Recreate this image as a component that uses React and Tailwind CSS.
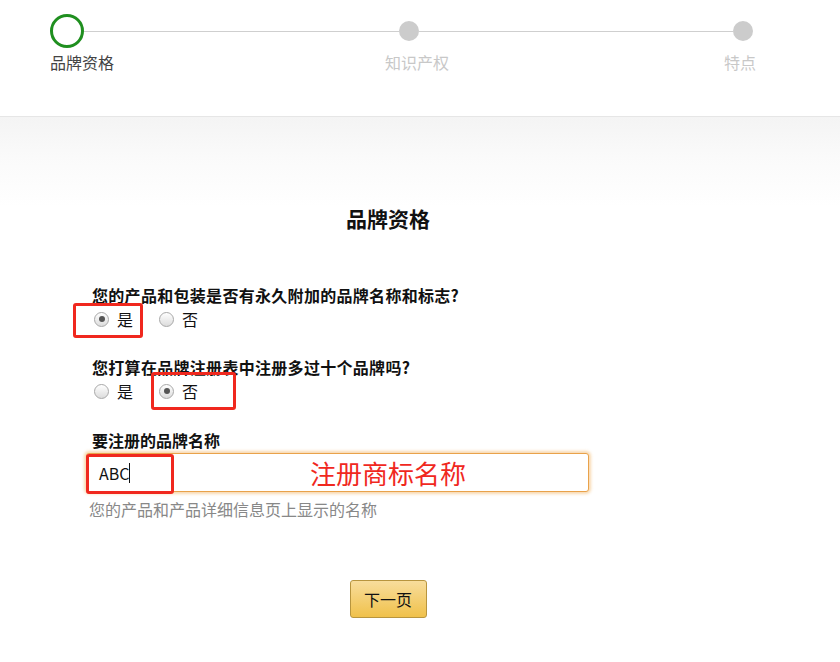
import React from 'react';

const FONT = { fontFamily: '"Noto Sans CJK SC", "Noto Sans", sans-serif' };

// Radio drawn by hand so it looks like the old grey browser radios
const Radio = ({ checked, label }) => (
  <div className="flex items-center">
    <span className="w-[15px] h-[15px] rounded-full border border-[#a8a8a8] bg-[linear-gradient(to_bottom,#ffffff,#dcdcdc)] flex items-center justify-center">
      {checked && <span className="w-[6px] h-[6px] rounded-full bg-[#555]" />}
    </span>
    <span className="ml-[8px] text-[16px] leading-5 text-[#111]">{label}</span>
  </div>
);

// red annotation frame drawn over the form
const Mark = ({ className }) => (
  <div className={`absolute border-[3px] border-[#f0281e] rounded-[3px] ${className}`} />
);

const Stepper = () => (
  <header className="h-[117px] border-b border-[#e6e6e6] bg-white pt-[14px] pl-[50px] pr-[87px]">
    <div className="flex items-center">
      <span className="w-[34px] h-[34px] rounded-full border-[3px] border-[#1f8f1f] bg-white" />
      <span className="flex-1 h-px bg-[#cfcfcf]" />
      <span className="w-[20px] h-[20px] rounded-full bg-[#cccccc]" />
      <span className="flex-1 h-px bg-[#cfcfcf]" />
      <span className="w-[20px] h-[20px] rounded-full bg-[#cccccc]" />
    </div>
    <div className="flex mt-[2px] text-[16px] leading-[24px]">
      <span className="text-[#444]">品牌资格</span>
      <span className="ml-[271px] text-[#c8c8c8]">知识产权</span>
      <span className="ml-auto -mr-[3px] text-[#c8c8c8]">特点</span>
    </div>
  </header>
);

export default function App() {
  return (
    <div className="w-[840px] min-h-[662px] bg-white" style={FONT}>
      <Stepper />
      <main className="bg-[linear-gradient(to_bottom,#f4f4f4,#fafafa_40px,#ffffff_90px)] pb-[44px]">
        <div className="w-[596px] ml-[90px] pt-[87px]">
          <h1 className="text-center text-[21px] leading-7 font-bold text-[#111]">品牌资格</h1>

          <p className="mt-[53px] ml-[2px] text-[16px] leading-5 font-bold tracking-[0.3px] text-[#111]">
            您的产品和包装是否有永久附加的品牌名称和标志?
          </p>
          <div className="relative mt-[4px] ml-[4px] flex gap-[26px]">
            <Radio checked label="是" />
            <Radio label="否" />
            <Mark className="-left-[21px] -top-[6px] w-[70px] h-[35px]" />
          </div>

          <p className="mt-[28px] ml-[2px] text-[16px] leading-5 font-bold tracking-[0.3px] text-[#111]">
            您打算在品牌注册表中注册多过十个品牌吗?
          </p>
          <div className="relative mt-[4px] ml-[4px] flex gap-[26px]">
            <Radio label="是" />
            <Radio checked label="否" />
            <Mark className="left-[57px] -top-[9px] w-[85px] h-[38px]" />
          </div>

          <p className="mt-[29px] ml-[2px] text-[16px] leading-5 font-bold text-[#111]">要注册的品牌名称</p>
          <div className="relative mt-[3px] -ml-[4px] w-[503px] h-[39px] rounded-[3px] border border-[#e9a24a] shadow-[0_0_3px_2px_rgba(240,170,80,0.45)] bg-white flex items-center pl-[12px]">
            <span className="text-[16px] text-[#111]">ABC</span>
            <span className="w-px h-[20px] bg-[#111]" />
            <span className="absolute left-[223px] top-1/2 -translate-y-1/2 text-[26px] leading-none text-[#f0281e]">注册商标名称</span>
            <Mark className="-left-[1px] top-0 w-[88px] h-[40px]" />
          </div>
          <p className="mt-[7px] -ml-[1px] text-[16px] leading-5 text-[#888]">您的产品和产品详细信息页上显示的名称</p>

          <div className="mt-[61px] flex justify-center">
            <button className="w-[77px] h-[38px] rounded-[3px] border border-[#b8953e] bg-[linear-gradient(to_bottom,#f8dd9c,#f0c14b)] text-[16px] text-[#111]">
              下一页
            </button>
          </div>
        </div>
      </main>
    </div>
  );
}
